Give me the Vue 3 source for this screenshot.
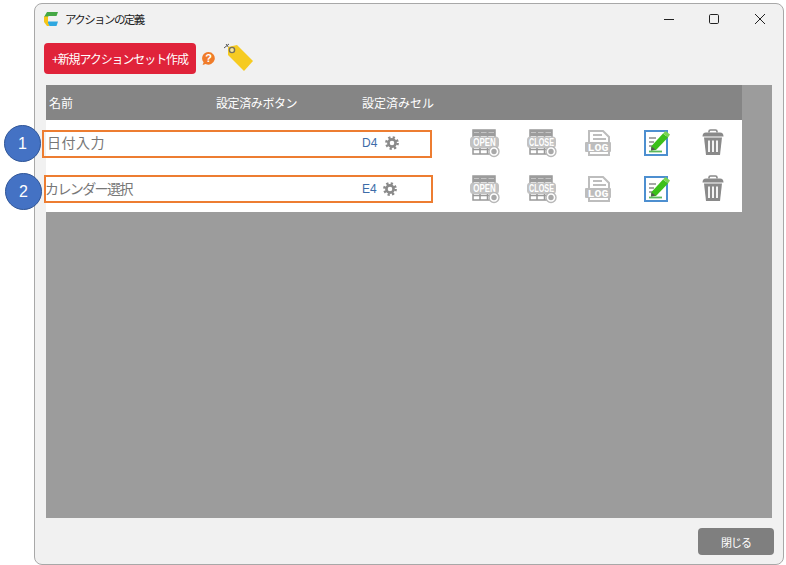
<script setup>
const rows = [
  { name: '日付入力', cell: 'D4', cls: 'first' },
  { name: 'カレンダー選択', cell: 'E4', cls: 'second' }
]
const tables = [
  { label: 'OPEN', scale: 0.72 },
  { label: 'CLOSE', scale: 0.66 }
]
</script>

<template>
  <div class="page">
    <div class="window">
      <div class="titlebar">
        <svg class="logo" width="16" height="16" viewBox="0 0 16 16">
          <path d="M4 1H15L13.5 5H5.5L5 6H1Z" fill="#45a845" />
          <path d="M1 5.5H5V10.5L6.5 15H4L1 11Z" fill="#f5c518" />
          <path d="M5 10.5H15L13.5 15H6.5L5 12Z" fill="#2fa8e0" />
        </svg>
        <span class="title">アクションの定義</span>
        <div class="controls">
          <svg width="12" height="12" viewBox="0 0 12 12"><path d="M2 6.5H12" stroke="#222" stroke-width="1" /></svg>
          <svg width="12" height="12" viewBox="0 0 12 12"><rect x="1.5" y="1.5" width="9" height="9" rx="1.2" fill="none" stroke="#222" /></svg>
          <svg width="12" height="12" viewBox="0 0 12 12"><path d="M1 1L11 11M11 1L1 11" stroke="#222" /></svg>
        </div>
      </div>

      <div class="toolbar">
        <button class="create">+新規アクションセット作成</button>
        <svg class="help" width="15" height="15" viewBox="0 0 15 15">
          <path d="M7.5 1A6.3 6.3 0 1 1 4.6 12.9L1.6 14L2.6 11.3A6.3 6.3 0 0 1 7.5 1Z" fill="#f07c2a" />
          <text x="7.5" y="11" text-anchor="middle" class="help-mark">?</text>
        </svg>
        <svg class="tag" width="32" height="30" viewBox="0 0 32 30">
          <path d="M3 1L6 5M1 5L6 1" stroke="#555" stroke-width="1" />
          <path d="M5 4L14 2L30 18L21 28L5 12Z" fill="#f6cb21" />
          <circle cx="9" cy="7" r="2.6" fill="#f6e7a0" stroke="#77705a" stroke-width="1.4" />
        </svg>
      </div>

      <div class="panel">
        <div class="table">
          <div class="head">
            <span class="col-name">名前</span>
            <span class="col-button">設定済みボタン</span>
            <span class="col-cell">設定済みセル</span>
          </div>
          <div v-for="row in rows" :key="row.cell" class="row" :class="row.cls">
            <span class="col-name name-text">{{ row.name }}</span>
            <span class="col-button"></span>
            <span class="col-cell cell-text">
              {{ row.cell }}
              <svg class="gear" width="14" height="14" viewBox="0 0 14 14">
                <circle cx="7" cy="7" r="5.6" fill="none" stroke="#8a8a8a" stroke-width="2.6" stroke-dasharray="2.2 2.2" />
                <circle cx="7" cy="7" r="3.6" fill="none" stroke="#8a8a8a" stroke-width="2.6" />
              </svg>
            </span>
            <div class="icons">
              <svg v-for="t in tables" :key="t.label" class="icon" width="30" height="28" viewBox="0 0 30 28">
                <path d="M3 1H25V25H3Z M3 20.5H25 M10 1V25 M17.5 1V25" fill="none" stroke="#999" stroke-width="1.5" />
                <rect x="3" y="1" width="22" height="6" fill="#9c9c9c" />
                <path d="M4 3.5H9M11 3.5H16.5M18.5 3.5H24" stroke="#c4c4c4" stroke-width="1.2" />
                <rect x="0" y="7.5" width="29" height="11.5" rx="3.5" fill="#c2c2c2" />
                <text class="tbl-label" text-anchor="middle" :transform="`translate(14.5 17) scale(${t.scale} 1)`">{{ t.label }}</text>
                <circle cx="24" cy="22.5" r="5" fill="#fff" stroke="#b8b8b8" stroke-width="1.4" />
                <circle cx="24" cy="22.5" r="2.7" fill="#a8a8a8" />
              </svg>
              <svg class="icon" width="30" height="28" viewBox="-1 0 30 28">
                <path d="M4 2H18L24 8V26H4Z" fill="#fff" stroke="#bdbdbd" stroke-width="2" />
                <path d="M8 6H17M8 10H21" stroke="#bdbdbd" stroke-width="2" />
                <rect x="0" y="13" width="26" height="10" rx="1" fill="#bdbdbd" />
                <text x="13" y="21.5" text-anchor="middle" class="log-label" textLength="21" lengthAdjust="spacingAndGlyphs">LOG</text>
              </svg>
              <svg class="icon pen" width="30" height="28" viewBox="-3 0 30 28">
                <rect x="1" y="2" width="22" height="24" fill="#fff" stroke="#4d8fd0" stroke-width="2" />
                <path d="M5 9H12M5 13H10M5 17H9" stroke="#8a8a8a" stroke-width="1.6" />
                <path d="M5 22.5H18" stroke="#5cb85c" stroke-width="1.8" />
                <path d="M7.5 17L19 4.5L24 8.5L12 21L7 21.5Z" fill="#3cc01a" />
                <path d="M19 4.5L21.5 2L26 5.5L24 8.5Z" fill="#7ad452" />
                <path d="M7 21.5L7.5 17.5L11.5 20.5Z" fill="#555" />
              </svg>
              <svg class="icon" width="30" height="28" viewBox="0 0 30 28">
                <path d="M11 3.5V2.5Q11 1 12.5 1H17.5Q19 1 19 2.5V3.5" fill="none" stroke="#8a8a8a" stroke-width="1.6" />
                <path d="M4.5 7.5Q4.5 3.5 8 3.5H22Q25.5 3.5 25.5 7.5Z" fill="#8a8a8a" />
                <path d="M6 8.5H24L22 26H8Z" fill="#8a8a8a" />
                <path d="M11 11.5V23M15 11.5V23M19 11.5V23" stroke="#fff" stroke-width="1.8" />
              </svg>
            </div>
            <span class="outline"></span>
            <span class="badge">{{ row.cls === 'first' ? 1 : 2 }}</span>
          </div>
        </div>
      </div>

      <div class="footer">
        <button class="close">閉じる</button>
      </div>
    </div>
  </div>
</template>

<style>
html, body { margin: 0; background: #fff; }
</style>

<style scoped>
.page {
  width: 786px;
  height: 565px;
  box-sizing: border-box;
  padding: 3px 2px 0 34px;
  overflow: hidden;
  font-family: "Noto Sans CJK JP", "Noto Sans", sans-serif;
}
.window {
  height: 562px;
  box-sizing: border-box;
  display: flex;
  flex-direction: column;
  background: #f1f1f1;
  border: 1px solid #a8a8a8;
  border-radius: 8px;
}
.titlebar {
  height: 30px;
  display: flex;
  align-items: center;
  padding-left: 8px;
  flex: none;
}
.logo { margin-right: 6px; }
.title { font-size: 11.5px; letter-spacing: -1.6px; color: #222; }
.controls {
  margin-left: auto;
  margin-right: 17px;
  display: flex;
  gap: 34px;
}
.toolbar {
  height: 51px;
  flex: none;
  padding: 9px 0 0 9px;
  box-sizing: border-box;
  display: flex;
  align-items: flex-start;
}
.create {
  width: 152px;
  height: 31px;
  border: 0;
  padding: 0;
  border-radius: 4px;
  background: #e0233a;
  color: #fff;
  font: 12px "Noto Sans CJK JP", sans-serif;
  letter-spacing: -1.1px;
  white-space: nowrap;
}
.help { margin: 8px 0 0 5px; }
.help-mark { font: bold 11px "Liberation Sans", sans-serif; fill: #fff; }
.tag { margin: 0 0 0 7px; }
.panel {
  flex: none;
  height: 433px;
  margin: 0 11px;
  background: #9c9c9c;
}
.table { width: 696px; }
.head {
  height: 35px;
  background: #858585;
  color: #fff;
  font-size: 12px;
  display: flex;
  align-items: center;
  padding-left: 3px;
}
.col-name { width: 167px; flex: none; }
.col-button { width: 146px; flex: none; letter-spacing: -0.4px; }
.col-cell { flex: none; }
.row {
  position: relative;
  height: 46px;
  background: #fff;
  display: flex;
  align-items: center;
  box-sizing: border-box;
}
.first { padding-left: 1px; }
.name-text { font-size: 14px; color: #777; width: 169px; padding-bottom: 2px; letter-spacing: 0.5px; }
.second .name-text { width: 170px; margin-left: -1px; padding-left: 0; flex-basis: 171px; letter-spacing: -1.6px; }
.cell-text {
  width: 90px;
  display: flex;
  align-items: center;
  gap: 8px;
  font: 12px "Liberation Sans", sans-serif;
  color: #3d6ca8;
}
.second .cell-text { gap: 6px; }
.gear { flex: none; }
.icons {
  display: flex;
  gap: 27px;
  margin-left: 18px;
  align-items: center;
}
.icon { flex: none; overflow: visible; }
.tbl-label { font: bold 11px "Liberation Sans", sans-serif; fill: #fff; }
.log-label { font: bold 10px "Liberation Mono", monospace; fill: #fff; }
.outline {
  position: absolute;
  border: 2px solid #ed7d31;
  box-sizing: border-box;
  height: 28px;
  top: 10px;
  left: -4px;
  width: 390px;
}
.second .outline { top: 9px; left: -2px; width: 389px; }
.badge {
  position: absolute;
  width: 37px;
  height: 37px;
  border-radius: 50%;
  background: #4472c4;
  border: 1px solid #2f5597;
  box-sizing: border-box;
  color: #fff;
  font: 16px "Liberation Sans", sans-serif;
  display: flex;
  align-items: center;
  justify-content: center;
  top: 5px;
  left: -42px;
}
.second .badge { top: 7px; left: -41px; }
.footer {
  flex: 1;
  display: flex;
  align-items: flex-start;
  justify-content: flex-end;
  padding: 10px 9px 0 0;
}
.close {
  width: 76px;
  height: 27px;
  border: 0;
  padding: 0;
  border-radius: 4px;
  background: #7f7f7f;
  color: #fff;
  font: 11px "Noto Sans CJK JP", sans-serif;
  letter-spacing: -1px;
}
</style>
